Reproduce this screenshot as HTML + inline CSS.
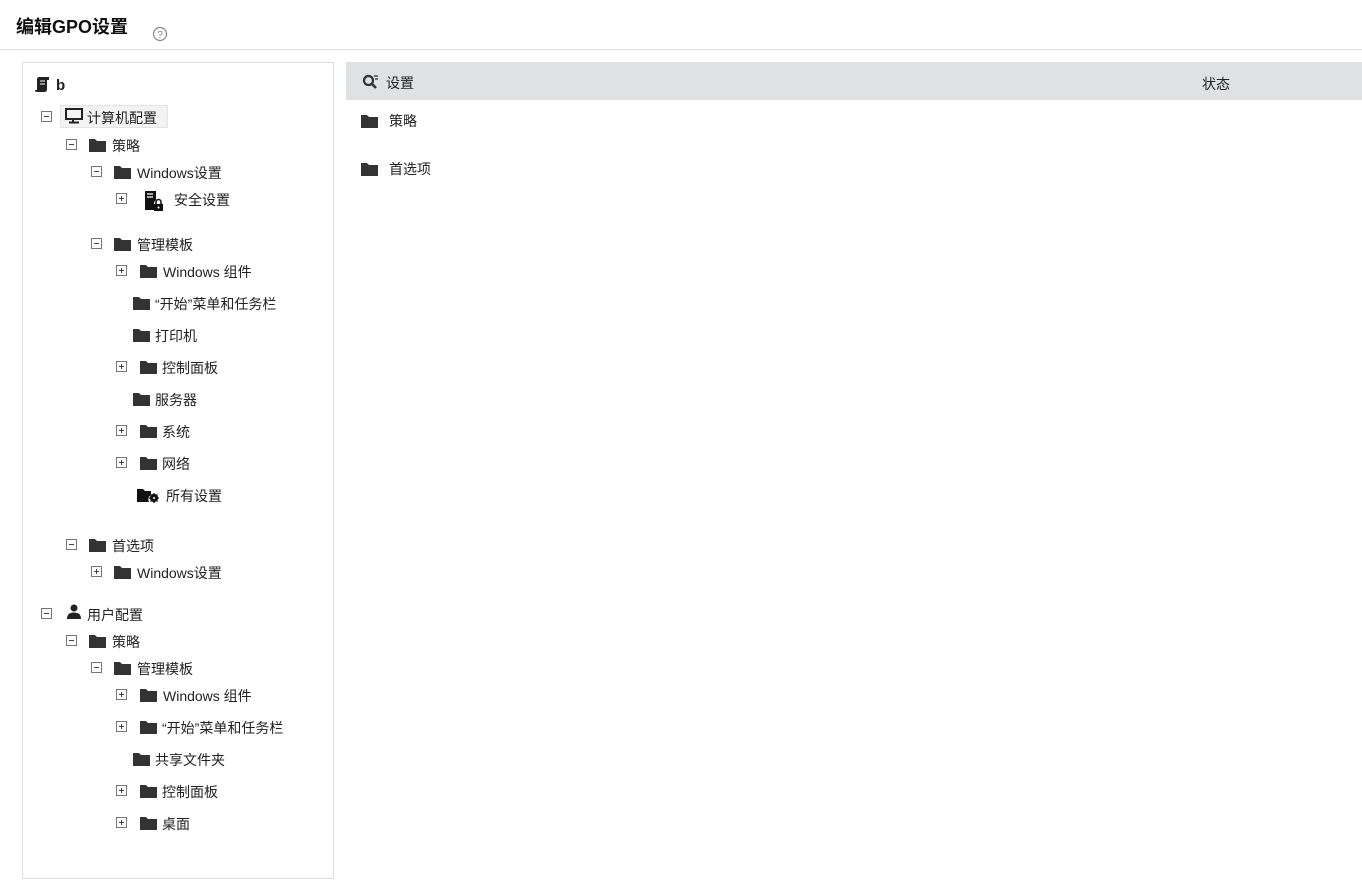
<!DOCTYPE html>
<html><head><meta charset="utf-8"><style>
*{margin:0;padding:0;box-sizing:border-box}
body{width:1362px;height:880px;background:#fff;position:relative;overflow:hidden;font-family:"Liberation Sans","Noto Sans CJK SC",sans-serif;font-size:14px;color:#222}
.a{position:absolute;white-space:nowrap;line-height:16px}
.t{position:absolute;white-space:nowrap;line-height:18px;transform:translateY(-8px)}
.e{position:absolute;width:11px;height:11px;border:1px solid #777;transform:translateY(-3px)}
.e::before{content:"";position:absolute;left:2px;top:4px;width:5px;height:1px;background:#444}
.p::after{content:"";position:absolute;left:4px;top:2px;width:1px;height:5px;background:#444}
.f{position:absolute;width:17px;height:13px;transform:translateY(-5px)}
</style></head><body>
<div class="a" style="left:16px;top:16px;font-size:18px;font-weight:bold;line-height:22px;color:#111">编辑GPO设置</div>
<svg class="a" style="left:152px;top:26px" width="16" height="16" viewBox="0 0 16 16"><circle cx="8" cy="8" r="6.5" fill="none" stroke="#888" stroke-width="1.2"/><text x="8" y="12" text-anchor="middle" font-size="10" fill="#888" font-family="Liberation Sans">?</text></svg>
<div class="a" style="left:0;top:49px;width:1362px;height:1px;background:#ddd"></div>
<div class="a" style="left:22px;top:62px;width:312px;height:817px;border:1px solid #ddd"></div>
<div class="a" style="left:346px;top:62px;width:1016px;height:38px;background:#e0e1e2"></div>
<svg class="a" style="left:362px;top:74px" width="18" height="16" viewBox="0 0 18 16"><circle cx="6.5" cy="6.5" r="4.5" fill="none" stroke="#333" stroke-width="2.2"/><path d="M9.5 9.5L14 14" stroke="#333" stroke-width="2.6"/><path d="M12 2h4M13 5h3" stroke="#333" stroke-width="1.2"/></svg>
<div class="t" style="left:386px;top:82px">设置</div>
<div class="t" style="left:1202px;top:83px">状态</div>
<svg class="f" style="left:361px;top:120px" viewBox="0 0 17 13"><path d="M0 0h6l2 2h9v11H0z" fill="#333"/></svg>
<div class="t" style="left:389px;top:120px">策略</div>
<svg class="f" style="left:361px;top:168px" viewBox="0 0 17 13"><path d="M0 0h6l2 2h9v11H0z" fill="#333"/></svg>
<div class="t" style="left:389px;top:168px">首选项</div>

<svg class="a" style="left:35px;top:76px" width="16" height="17" viewBox="0 0 16 17"><path d="M4 1h10v3l-2 0v9c0 2-1 3-3 3H2c-1.5 0-2-1-2-2h2V3c0-1 1-2 2-2z" fill="#222"/><path d="M5 5h5M5 8h5" stroke="#fff" stroke-width="1"/></svg>
<div class="t" style="left:56px;top:85px;font-weight:bold;font-size:15px">b</div>

<div class="a" style="left:60px;top:105px;width:108px;height:23px;background:#f3f3f3;border:1px solid #e4e4e4"></div>
<div class="e" style="left:41px;top:114px"></div>
<svg class="a" style="left:65px;top:108px" width="18" height="16" viewBox="0 0 18 16"><rect x="1" y="1" width="16" height="10" fill="none" stroke="#222" stroke-width="2"/><path d="M8 11v3M4 14.5h10" stroke="#222" stroke-width="2"/></svg>
<div class="t" style="left:87px;top:117px">计算机配置</div>

<div class="e" style="left:66px;top:142px"></div>
<svg class="f" style="left:89px;top:144px" viewBox="0 0 17 13"><path d="M0 0h6l2 2h9v11H0z" fill="#333"/></svg>
<div class="t" style="left:112px;top:145px">策略</div>
<div class="e" style="left:91px;top:169px"></div>
<svg class="f" style="left:114px;top:171px" viewBox="0 0 17 13"><path d="M0 0h6l2 2h9v11H0z" fill="#333"/></svg>
<div class="t" style="left:137px;top:172px">Windows设置</div>
<div class="e p" style="left:116px;top:196px"></div>
<svg class="a" style="left:144px;top:190px" width="20" height="22" viewBox="0 0 20 22"><path d="M1 1h11v9a5 5 0 0 0-2 5v5H1z" fill="#111"/><path d="M3 4h6M3 7h6" stroke="#fff" stroke-width="1.2"/><rect x="10" y="14" width="9" height="7" fill="#111"/><path d="M12 14v-2a2.5 2.5 0 0 1 5 0v2" fill="none" stroke="#111" stroke-width="1.6"/><circle cx="14.5" cy="17.5" r="1" fill="#fff"/></svg>
<div class="t" style="left:174px;top:199px">安全设置</div>

<div class="e" style="left:91px;top:241px"></div>
<svg class="f" style="left:114px;top:243px" viewBox="0 0 17 13"><path d="M0 0h6l2 2h9v11H0z" fill="#333"/></svg>
<div class="t" style="left:137px;top:244px">管理模板</div>
<div class="e p" style="left:116px;top:268px"></div>
<svg class="f" style="left:140px;top:270px" viewBox="0 0 17 13"><path d="M0 0h6l2 2h9v11H0z" fill="#333"/></svg>
<div class="t" style="left:163px;top:271px">Windows 组件</div>
<svg class="f" style="left:133px;top:302px" viewBox="0 0 17 13"><path d="M0 0h6l2 2h9v11H0z" fill="#333"/></svg>
<div class="t" style="left:155px;top:303px">“开始”菜单和任务栏</div>
<svg class="f" style="left:133px;top:334px" viewBox="0 0 17 13"><path d="M0 0h6l2 2h9v11H0z" fill="#333"/></svg>
<div class="t" style="left:155px;top:335px">打印机</div>
<div class="e p" style="left:116px;top:364px"></div>
<svg class="f" style="left:140px;top:366px" viewBox="0 0 17 13"><path d="M0 0h6l2 2h9v11H0z" fill="#333"/></svg>
<div class="t" style="left:162px;top:367px">控制面板</div>
<svg class="f" style="left:133px;top:398px" viewBox="0 0 17 13"><path d="M0 0h6l2 2h9v11H0z" fill="#333"/></svg>
<div class="t" style="left:155px;top:399px">服务器</div>
<div class="e p" style="left:116px;top:428px"></div>
<svg class="f" style="left:140px;top:430px" viewBox="0 0 17 13"><path d="M0 0h6l2 2h9v11H0z" fill="#333"/></svg>
<div class="t" style="left:162px;top:431px">系统</div>
<div class="e p" style="left:116px;top:460px"></div>
<svg class="f" style="left:140px;top:462px" viewBox="0 0 17 13"><path d="M0 0h6l2 2h9v11H0z" fill="#333"/></svg>
<div class="t" style="left:162px;top:463px">网络</div>
<svg class="a" style="left:137px;top:488px" width="22" height="15" viewBox="0 0 22 15"><path d="M0 1h6l2 2h6v4a5 5 0 0 0-2 7H0z" fill="#111"/><circle cx="17" cy="10" r="3" fill="none" stroke="#111" stroke-width="2.2"/><path d="M17 5v10M12 10h10M13.5 6.5l7 7M20.5 6.5l-7 7" stroke="#111" stroke-width="1.3"/><circle cx="17" cy="10" r="1" fill="#fff"/></svg>
<div class="t" style="left:166px;top:495px">所有设置</div>

<div class="e" style="left:66px;top:542px"></div>
<svg class="f" style="left:89px;top:544px" viewBox="0 0 17 13"><path d="M0 0h6l2 2h9v11H0z" fill="#333"/></svg>
<div class="t" style="left:112px;top:545px">首选项</div>
<div class="e p" style="left:91px;top:569px"></div>
<svg class="f" style="left:114px;top:571px" viewBox="0 0 17 13"><path d="M0 0h6l2 2h9v11H0z" fill="#333"/></svg>
<div class="t" style="left:137px;top:572px">Windows设置</div>

<div class="e" style="left:41px;top:611px"></div>
<svg class="a" style="left:67px;top:604px" width="14" height="15" viewBox="0 0 14 15"><circle cx="7" cy="4" r="3.5" fill="#222"/><path d="M0 15c0-5 3-6.5 7-6.5s7 1.5 7 6.5z" fill="#222"/></svg>
<div class="t" style="left:87px;top:614px">用户配置</div>
<div class="e" style="left:66px;top:638px"></div>
<svg class="f" style="left:89px;top:640px" viewBox="0 0 17 13"><path d="M0 0h6l2 2h9v11H0z" fill="#333"/></svg>
<div class="t" style="left:112px;top:641px">策略</div>
<div class="e" style="left:91px;top:665px"></div>
<svg class="f" style="left:114px;top:667px" viewBox="0 0 17 13"><path d="M0 0h6l2 2h9v11H0z" fill="#333"/></svg>
<div class="t" style="left:137px;top:668px">管理模板</div>
<div class="e p" style="left:116px;top:692px"></div>
<svg class="f" style="left:140px;top:694px" viewBox="0 0 17 13"><path d="M0 0h6l2 2h9v11H0z" fill="#333"/></svg>
<div class="t" style="left:163px;top:695px">Windows 组件</div>
<div class="e p" style="left:116px;top:724px"></div>
<svg class="f" style="left:140px;top:726px" viewBox="0 0 17 13"><path d="M0 0h6l2 2h9v11H0z" fill="#333"/></svg>
<div class="t" style="left:162px;top:727px">“开始”菜单和任务栏</div>
<svg class="f" style="left:133px;top:758px" viewBox="0 0 17 13"><path d="M0 0h6l2 2h9v11H0z" fill="#333"/></svg>
<div class="t" style="left:155px;top:759px">共享文件夹</div>
<div class="e p" style="left:116px;top:788px"></div>
<svg class="f" style="left:140px;top:790px" viewBox="0 0 17 13"><path d="M0 0h6l2 2h9v11H0z" fill="#333"/></svg>
<div class="t" style="left:162px;top:791px">控制面板</div>
<div class="e p" style="left:116px;top:820px"></div>
<svg class="f" style="left:140px;top:822px" viewBox="0 0 17 13"><path d="M0 0h6l2 2h9v11H0z" fill="#333"/></svg>
<div class="t" style="left:162px;top:823px">桌面</div>
</body></html>
